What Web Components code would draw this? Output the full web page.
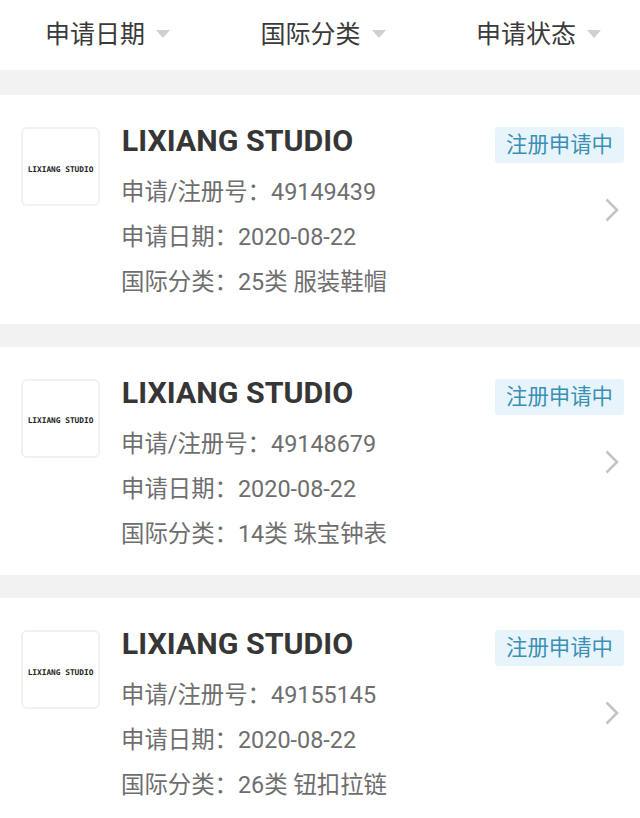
<!DOCTYPE html>
<html lang="zh">
<head>
<meta charset="utf-8">
<style>
    html, body { margin: 0; height: 818px; overflow: hidden; background: #f2f2f2; }
    body { font-family: Roboto, "Noto Sans CJK SC", sans-serif; }
    filter-bar { margin-bottom: 25px; }
</style>
</head>
<body>
<filter-bar>
    <filter-item>申请日期</filter-item>
    <filter-item>国际分类</filter-item>
    <filter-item>申请状态</filter-item>
</filter-bar>
<trademark-card number="49149439" date="2020-08-22" category="25类 服装鞋帽"></trademark-card>
<trademark-card number="49148679" date="2020-08-22" category="14类 珠宝钟表"></trademark-card>
<trademark-card number="49155145" date="2020-08-22" category="26类 钮扣拉链"></trademark-card>

<script>
const barTemplate = document.createElement('template');
barTemplate.innerHTML = `
<style>
    :host {
        display: flex;
        gap: 90.5px;
        height: 70px;
        padding-left: 45px;
        background: #fff;
    }
</style>
<slot></slot>
`;

class FilterBar extends HTMLElement {
    constructor() {
        super();
        this.attachShadow({mode: 'open'});
        this.shadowRoot.appendChild(barTemplate.content.cloneNode(true));
    }
}

const itemTemplate = document.createElement('template');
itemTemplate.innerHTML = `
<style>
    :host {
        display: flex;
        flex: none;
        align-items: center;
        height: 64px;
        font-size: 25px;
        color: #3a3a3a;
    }
    .arrow {
        width: 0;
        height: 0;
        margin: 3px 0 0 11px;
        border-left: 7px solid transparent;
        border-right: 7px solid transparent;
        border-top: 8px solid #d0d0d0;
    }
</style>
<slot></slot><span class="arrow"></span>
`;

class FilterItem extends HTMLElement {
    constructor() {
        super();
        this.attachShadow({mode: 'open'});
        this.shadowRoot.appendChild(itemTemplate.content.cloneNode(true));
    }
}

const cardTemplate = document.createElement('template');
cardTemplate.innerHTML = `
<style>
    :host {
        display: flex;
        height: 228.5px;
        margin-bottom: 23px;
        background: #fff;
        box-sizing: border-box;
        padding: 32px 16px 0 21px;
    }
    .logo {
        flex: none;
        display: flex;
        align-items: center;
        justify-content: center;
        box-sizing: border-box;
        width: 79px;
        height: 79px;
        padding-top: 5px;
        border: 2px solid #f1f1f1;
        border-radius: 6px;
        font: bold 7.8px "DejaVu Sans Mono", monospace;
        color: #222;
        white-space: nowrap;
    }
    .info {
        flex: 1;
        margin-left: 21px;
    }
    .title {
        font-size: 30.4px;
        font-weight: 700;
        line-height: 30px;
        color: #363636;
        margin: -1px 0 14px 0.8px;
    }
    .row {
        height: 45px;
        font-size: 23.4px;
        line-height: 45px;
        color: #6e6e6e;
        white-space: nowrap;
    }
    .colon {
        font-family: "Noto Sans CJK TC", sans-serif;
        line-height: 0;
    }
    .side {
        flex: none;
        display: flex;
        flex-direction: column;
        align-items: flex-end;
    }
    .tag {
        box-sizing: border-box;
        width: 129px;
        height: 36px;
        text-align: center;
        line-height: 35px;
        font-size: 21.4px;
        color: #3a8fb5;
        background: #e8f4fb;
        border-radius: 3px;
    }
    svg {
        margin: 35px 5px 0 0;
    }
</style>
<div class="logo">LIXIANG STUDIO</div>
<div class="info">
    <div class="title">LIXIANG STUDIO</div>
    <div class="row">申请/注册号<span class="colon">：</span><span id="number"></span></div>
    <div class="row">申请日期<span class="colon">：</span><span id="date"></span></div>
    <div class="row">国际分类<span class="colon">：</span><span id="category"></span></div>
</div>
<div class="side">
    <div class="tag">注册申请中</div>
    <svg width="14" height="24" viewBox="0 0 14 24" fill="none" stroke="#c4c4c4" stroke-width="2.6">
        <path d="M1.5 1.5 L12 12 L1.5 22.5"/>
    </svg>
</div>
`;

class TrademarkCard extends HTMLElement {
    constructor() {
        super();
        this.attachShadow({mode: 'open'});
        this.shadowRoot.appendChild(cardTemplate.content.cloneNode(true));
    }

    connectedCallback() {
        const root = this.shadowRoot;
        root.querySelector('#number').textContent = this.getAttribute('number');
        root.querySelector('#date').textContent = this.getAttribute('date');
        root.querySelector('#category').textContent = this.getAttribute('category');
    }
}

window.customElements.define('filter-bar', FilterBar);
window.customElements.define('filter-item', FilterItem);
window.customElements.define('trademark-card', TrademarkCard);
</script>
</body>
</html>
